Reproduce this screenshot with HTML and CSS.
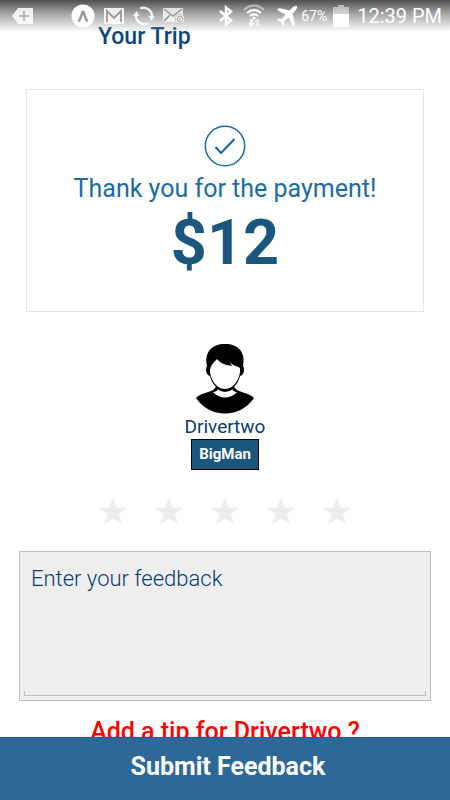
FILE: index.html
```html
<!DOCTYPE html>
<html lang="en">
<head>
<meta charset="utf-8">
<meta name="viewport" content="width=device-width, initial-scale=1">
<title>Your Trip</title>
<link rel="stylesheet" href="styles.css">
</head>
<body>
<div class="status">
  <div class="status-left">
    <svg class="tag" width="22" height="18" viewBox="0 0 22 18"><path fill="#fff" fill-opacity=".85" d="M6 1h15v16H6L0 9z"/><path stroke="#a8a8a8" stroke-width="1.5" d="M12 4v10M7 9h10"/></svg>
    <svg width="24" height="24" viewBox="0 0 24 24"><circle cx="12" cy="12" r="11.5" fill="#fff"/><path fill="none" stroke="#999" stroke-width="2.6" d="M7.5 17.500c2-2.500 3-6 4-9.500h1c1 3.500 2 7 4 9.500"/></svg>
    <svg width="22" height="18" viewBox="0 0 22 18"><path fill="#fff" fill-opacity=".85" d="M1 1h20v16H1z"/><path fill="none" stroke="#999" stroke-width="1.800" d="M4 15V4l7 7 7-7v11"/></svg>
    <svg width="22" height="20" viewBox="0 0 22 20"><g fill="none" stroke="#fff" stroke-opacity=".85" stroke-width="2.400"><path d="M7 2.500a8.500 8.500 0 0 1 12 8"/><path d="M15 17.500a8.500 8.500 0 0 1-12-8"/></g><path fill="#fff" fill-opacity=".85" d="M15.500 10H22l-3.500 5zM0 10h6.500L3.500 5z"/></svg>
    <svg width="22" height="18" viewBox="0 0 22 18"><path fill="#fff" fill-opacity=".75" d="M0 1h20v14H0z"/><path fill="none" stroke="#969696" stroke-width="1.500" d="M1 2l9 7 9-7M1 14l6-6"/><circle cx="17" cy="12" r="5" fill="#b8b8b8"/><circle cx="17" cy="12" r="4" fill="none" stroke="#f2f2f2"/><circle cx="17" cy="12" r="1.500" fill="none" stroke="#f2f2f2"/><path d="M18.500 11v2.500h2" fill="none" stroke="#f2f2f2"/></svg>
  </div>
  <div class="status-right">
    <svg class="bt" width="16" height="22" viewBox="0 0 16 22"><path fill="none" stroke="#fff" stroke-width="2.500" d="M2 6l11 9.500-5 4V2.500l5 4L2 16"/></svg>
    <svg class="wifi" width="22" height="23" viewBox="0 0 22 23"><g fill="none" stroke="#fff" stroke-width="2.200"><path stroke-opacity=".45" d="M1 6q10-9 20 0"/><path d="M4 9q7-6 14 0M7 12q4-3.500 8 0"/></g><circle cx="11" cy="14" r="1.500" fill="#fff"/><path fill="#fff" d="M7 15h3v4h2l-3.500 4L5 19h2z"/><path fill="#fff" fill-opacity=".5" d="M13 22h3v-4h2l-3.500-4-3.500 4h2z"/></svg>
    <svg class="plane" width="20" height="20" viewBox="0 0 20 20"><path fill="#fff" d="M20 0c-2-.5-3.500.5-5 2l-2.500 2.500L2 2 0 4l8.500 4.500-4 4.500L1 12.500 0 14l4 2 2 4 1.500-1L7 15.500l4.500-4L16 20l2-2-2.500-10.500L18 5c1.500-1.500 2.500-3 2-5z"/></svg>
    <span class="percent">67%</span>
    <svg class="battery" width="16" height="22" viewBox="0 0 16 22"><path fill="#fff" fill-opacity=".5" d="M5 0h6v2h5v7H0V2h5z"/><path fill="#fff" d="M0 9h16v13H0z"/></svg>
    <span class="clock">12:39 PM</span>
  </div>
</div>
<header class="title"><h1>Your Trip</h1></header>
<main class="content">
  <section class="receipt">
    <svg width="42" height="42" viewBox="0 0 42 42"><circle cx="21" cy="21" r="19.700" fill="none" stroke="#1c6ca3" stroke-width="1.500"/><path fill="none" stroke="#1c6ca3" stroke-width="2.200" d="M11.500 22l5.500 6 13.500-14"/></svg>
    <p class="thanks">Thank you for the payment!</p>
    <p class="amount">$12</p>
  </section>
  <section class="driver">
    <svg width="60" height="70" viewBox="0 0 60 70"><path d="M1 54c5-5 12-5 17-8l3-3c-3-3-5-7-6-11-4-1-5-7-3-10C9 8 17 0 30 0s21 8 18 22c2 3 1 9-3 10-1 4-3 8-6 11l3 3c5 3 12 3 17 8-7 10-17 15.500-29 15.500S8 64 1 54z"/><path fill="#fff" d="M15 27c0-5 4-9 7-12 4 5 9 6 15 7l-2-4c3 4 7 4 10 6v3c0 7-6 18-15 18S15 34 15 27z"/><path fill="#fff" d="M22 45q8 6 16 0l-.5 1.500 4.500 2q-12 10-24 0l4.500-2z"/></svg>
    <p class="name">Drivertwo</p>
    <span class="badge">BigMan</span>
  </section>
  <fieldset class="stars">
    <input type="radio" name="rating" value="1" aria-label="1 star">
    <input type="radio" name="rating" value="2" aria-label="2 stars">
    <input type="radio" name="rating" value="3" aria-label="3 stars">
    <input type="radio" name="rating" value="4" aria-label="4 stars">
    <input type="radio" name="rating" value="5" aria-label="5 stars">
  </fieldset>
  <div class="feedback">
    <textarea aria-label="Feedback" placeholder="Enter your feedback"></textarea>
    <div class="underline"></div>
  </div>
  <p class="tip">Add a tip for Drivertwo ?</p>
</main>
<button class="submit" type="button">Submit Feedback</button>
</body>
</html>
```
FILE: styles.css
```css
* { box-sizing: border-box; }
body {
  margin: 0;
  height: 100vh;
  display: flex;
  flex-direction: column;
  background: #fff;
  color: #0b3c6e;
  font-family: Roboto, "Liberation Sans", sans-serif;
}
svg { display: block; flex: none; }
h1, p { margin: 0; }

.status {
  position: absolute;
  top: 0;
  left: 0;
  right: 0;
  height: 32px;
  padding: 0 8px 0 12px;
  display: flex;
  justify-content: space-between;
  background: linear-gradient(#505050, #a8a8a8 44%, rgba(255, 255, 255, 0));
  color: #fff;
}
.status-left, .status-right { display: flex; align-items: center; height: 31px; }
.status-left { gap: 8px; }
.tag { margin-right: 29px; }
.bt { margin-right: 9px; }
.wifi { margin-right: 12px; }
.plane { margin-right: 4px; }
.percent { font-size: 14px; font-weight: 400; }
.battery { margin: 0 8px 0 6px; }
.clock { font-size: 20px; font-weight: 400; }

.title { padding: 21px 98px 0; flex: none; }
.title h1 { font-size: 23px; line-height: 32px; font-weight: 500; color: #0c4675; }

.content {
  flex: 1;
  min-height: 0;
  overflow: hidden;
  display: flex;
  flex-direction: column;
}
.content > * { flex: none; }
.receipt {
  margin: 36px 26px 0;
  padding: 35px 0 33px;
  border: 1px solid #e6e6e6;
  display: flex;
  flex-direction: column;
  align-items: center;
}
.thanks { margin-top: 5px; font-size: 25px; line-height: 34px; font-weight: 400; color: #1c6ca3; }
.amount { margin-top: 2px; font-size: 63px; line-height: 70px; font-weight: 700; color: #1b567d; }

.driver { margin-top: 32px; display: flex; flex-direction: column; align-items: center; }
.name { font-size: 19px; line-height: 25px; font-weight: 400; }
.badge {
  padding: 0 7px;
  border: 1px solid #000;
  background: #1b567d;
  color: #fff;
  font-size: 15px;
  line-height: 29px;
  font-weight: 700;
}

.stars {
  margin: 27px 0 0;
  padding: 0;
  border: 0;
  display: flex;
  justify-content: center;
  gap: 26px;
}
.stars input {
  appearance: none;
  margin: 0;
  width: 30px;
  height: 28px;
  background: #ededed;
  clip-path: polygon(50% 0, 62% 38%, 100% 38%, 69% 61%, 81% 100%, 50% 76%, 19% 100%, 31% 61%, 0 38%, 38% 38%);
}
.stars input:checked { background: #f5b301; }

.feedback {
  margin: 26px 19px 0;
  padding: 0 4px 4px;
  border: 1px solid #bfbfbf;
  background: #eee;
}
.feedback textarea {
  display: block;
  width: 100%;
  height: 139px;
  padding: 12px 7px;
  border: 0;
  outline: 0;
  resize: none;
  background: none;
  color: #0b3c6e;
  font: 300 22px/30px Roboto, "Liberation Sans", sans-serif;
}
.feedback textarea::placeholder { color: #0b3c6e; opacity: 1; }
.underline { height: 5px; border: 1px solid #bfbfbf; border-top: 0; }

.tip { margin-top: 15px; text-align: center; font-size: 25px; line-height: 32px; font-weight: 500; color: #f00; }

.submit {
  flex: none;
  height: 63px;
  padding: 0 0 5px 6px;
  border: 0;
  border-top: 1px solid #1b5f92;
  background: #2d6896;
  color: #fff;
  font: 700 25px/32px Roboto, "Liberation Sans", sans-serif;
}
```
